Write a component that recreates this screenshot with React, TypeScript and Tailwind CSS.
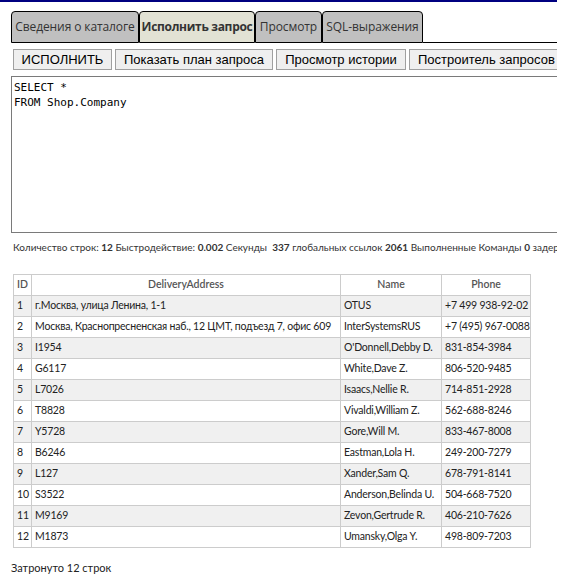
import React from "react";

const rows: [string, string, string, string][] = [
  ["1", "г.Москва, улица Ленина, 1-1", "OTUS", "+7 499 938-92-02"],
  ["2", "Москва, Краснопресненская наб., 12 ЦМТ, подъезд 7, офис 609", "InterSystemsRUS", "+7 (495) 967-0088"],
  ["3", "I1954", "O'Donnell,Debby D.", "831-854-3984"],
  ["4", "G6117", "White,Dave Z.", "806-520-9485"],
  ["5", "L7026", "Isaacs,Nellie R.", "714-851-2928"],
  ["6", "T8828", "Vivaldi,William Z.", "562-688-8246"],
  ["7", "Y5728", "Gore,Will M.", "833-467-8008"],
  ["8", "B6246", "Eastman,Lola H.", "249-200-7279"],
  ["9", "L127", "Xander,Sam Q.", "678-791-8141"],
  ["10", "S3522", "Anderson,Belinda U.", "504-668-7520"],
  ["11", "M9169", "Zevon,Gertrude R.", "406-210-7626"],
  ["12", "M1873", "Umansky,Olga Y.", "498-809-7203"],
];

export default function App() {
  const tabFont = { fontFamily: '"Open Sans", "Noto Sans", sans-serif' };
  const bodyFont = { fontFamily: 'Lato, "Open Sans", sans-serif' };
  return (
    <div className="w-[557px] overflow-hidden bg-white" style={bodyFont}>
      <div className="h-[2px] bg-[#000080]" />
      <div className="flex items-end mt-[9px] pl-[11px]" style={tabFont}>
        <div className="w-[128px] h-[32px] flex items-center justify-center border border-black rounded-t-[4px] bg-[#c0c0c0] text-[12px] tracking-[-0.1px] text-[#333] whitespace-nowrap">
          Сведения о каталоге
        </div>
        <div className="w-[116px] h-[32px] flex items-center justify-center border border-black rounded-t-[4px] bg-[#e2e2d4] text-[12px] tracking-[-0.3px] font-bold text-[#333] whitespace-nowrap">
          Исполнить запрос
        </div>
        <div className="w-[67px] h-[32px] flex items-center justify-center border border-black rounded-t-[4px] bg-[#c0c0c0] text-[12px] tracking-[-0.1px] text-[#333] whitespace-nowrap">
          Просмотр
        </div>
        <div className="w-[101px] h-[32px] flex items-center justify-center border border-black rounded-t-[4px] bg-[#c0c0c0] text-[12px] tracking-[-0.1px] text-[#333] whitespace-nowrap">
          SQL-выражения
        </div>
        <div className="flex-1 border-b border-black" />
      </div>
      <div className="flex mt-[6px] pl-[13px] gap-[3px] whitespace-nowrap" style={{ fontFamily: '"Liberation Sans", Arial, sans-serif' }}>
        <div className="w-[99px] h-[21px] shrink-0 flex items-center justify-center border border-[#a0a0a0] bg-[#efefef] text-[13px] text-black">ИСПОЛНИТЬ</div>
        <div className="w-[158px] h-[21px] shrink-0 flex items-center justify-center border border-[#a0a0a0] bg-[#efefef] text-[13px] text-black">Показать план запроса</div>
        <div className="w-[130px] h-[21px] shrink-0 flex items-center justify-center border border-[#a0a0a0] bg-[#efefef] text-[13px] text-black">Просмотр истории</div>
        <div className="w-[160px] h-[21px] shrink-0 flex items-center justify-start pl-[8px] border border-[#a0a0a0] bg-[#efefef] text-[13px] text-black">Построитель запросов</div>
      </div>
      <div className="mt-[6px] ml-[11px] w-[600px] h-[157px] border border-[#7a7a7a] px-[2px] pt-[3px] text-[11px] leading-[15px] text-black whitespace-pre" style={{ fontFamily: '"DejaVu Sans Mono", monospace' }}>
        {"SELECT *\nFROM Shop.Company"}
      </div>
      <div className="mt-[7px] ml-[13px] w-[544px] overflow-hidden text-[10px] leading-[14px] text-[#333] whitespace-nowrap">
        Количество строк: <b>12</b> Быстродействие: <b>0.002</b> Секунды&nbsp;&nbsp;<b>337</b> глобальных ссылок <b>2061</b> Выполненные Команды <b>0</b> задер
      </div>
      <table className="mt-[20px] ml-[13px] w-[517px] border-collapse table-fixed text-[10.5px] text-[#222]">
        <thead>
          <tr className="h-[21px] bg-white">
            <th className="w-[18px] border border-[#cccccc] font-semibold text-[#555] text-center p-0">ID</th>
            <th className="w-[309px] border border-[#cccccc] font-semibold text-[#555] text-center p-0">DeliveryAddress</th>
            <th className="w-[101px] border border-[#cccccc] font-semibold text-[#555] text-center p-0">Name</th>
            <th className="w-[89px] border border-[#cccccc] font-semibold text-[#555] text-center p-0">Phone</th>
          </tr>
        </thead>
        <tbody className="tracking-[-0.2px]">
          {rows.map((r, i) => (
            <tr key={r[0]} className={i % 2 === 0 ? "h-[21px] bg-[#f0f0f0]" : "h-[21px] bg-white"}>
              <td className="border border-[#cccccc] px-[3px] py-0 whitespace-nowrap">{r[0]}</td>
              <td className="border border-[#cccccc] pl-[3px] pr-0 py-0 whitespace-nowrap overflow-hidden">{r[1]}</td>
              <td className="border border-[#cccccc] px-[3px] py-0 whitespace-nowrap overflow-hidden">{r[2]}</td>
              <td className="border border-[#cccccc] pl-[3px] pr-0 py-0 whitespace-nowrap overflow-hidden">{r[3]}</td>
            </tr>
          ))}
        </tbody>
      </table>
      <div className="mt-[12px] ml-[11px] text-[11px] text-[#222] pb-[6px]">Затронуто 12 строк</div>
    </div>
  );
}
